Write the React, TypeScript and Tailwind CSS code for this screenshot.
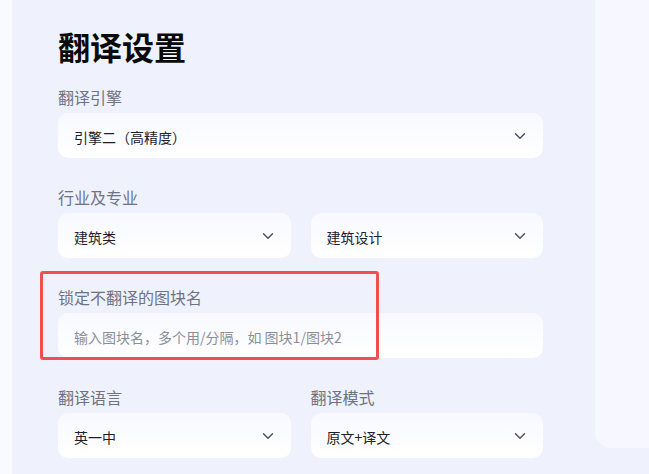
import { ChevronDown } from "lucide-react";

const FONT = { fontFamily: '"Noto Sans CJK SC", "Noto Sans", sans-serif' };

function Select({ value }: { value: string }) {
  return (
    <div className="flex h-[45px] items-center justify-between rounded-[10px] bg-linear-to-b from-[#f8f9ff] to-white pl-4 pr-[14px]">
      <span className="pt-1 text-[14px] text-[#1d2129]">{value}</span>
      <ChevronDown size={18} strokeWidth={2} className="text-[#4e5461]" />
    </div>
  );
}

function Label({ children }: { children: React.ReactNode }) {
  return <div className="mb-1 text-[16px] leading-6 text-[#6e7383]">{children}</div>;
}

export default function App() {
  return (
    <div className="flex h-[474px] w-[649px] overflow-hidden bg-[#f9faff]" style={FONT}>
      <div className="w-3 shrink-0" />
      <div className="flex flex-1 bg-[#eff2fd]">
        {/* settings column */}
        <div className="w-[583px] shrink-0 pl-[46px] pr-[52px] pt-[26px]">
          <h1 className="mb-[19px] text-[32px] font-bold leading-10 text-[#0a0a0a]">翻译设置</h1>

          <div className="flex flex-col gap-[27px]">
            <div>
              <Label>翻译引擎</Label>
              <Select value="引擎二（高精度）" />
            </div>

            <div>
              <Label>行业及专业</Label>
              <div className="grid grid-cols-2 gap-5">
                <Select value="建筑类" />
                <Select value="建筑设计" />
              </div>
            </div>

            <div className="relative">
              <Label>锁定不翻译的图块名</Label>
              <div className="flex h-[45px] items-center rounded-[10px] bg-linear-to-b from-[#f8f9ff] to-white pl-4">
                <span className="pt-1 text-[14px] text-[#8a8e99]">输入图块名，多个用/分隔，如 图块1/图块2</span>
              </div>
              {/* annotation box */}
              <div className="pointer-events-none absolute -left-[18px] -top-[14px] h-[89px] w-[339px] rounded-[3px] border-[3px] border-[#f04f4f]" />
            </div>

            <div>
              <div className="grid grid-cols-2 gap-5">
                <div>
                  <Label>翻译语言</Label>
                  <Select value="英一中" />
                </div>
                <div>
                  <Label>翻译模式</Label>
                  <Select value="原文+译文" />
                </div>
              </div>
            </div>
          </div>
        </div>

        {/* right preview panel */}
        <div className="flex-1">
          <div className="h-[448px] rounded-bl-2xl bg-[#f7f8ff]" />
        </div>
      </div>
    </div>
  );
}
